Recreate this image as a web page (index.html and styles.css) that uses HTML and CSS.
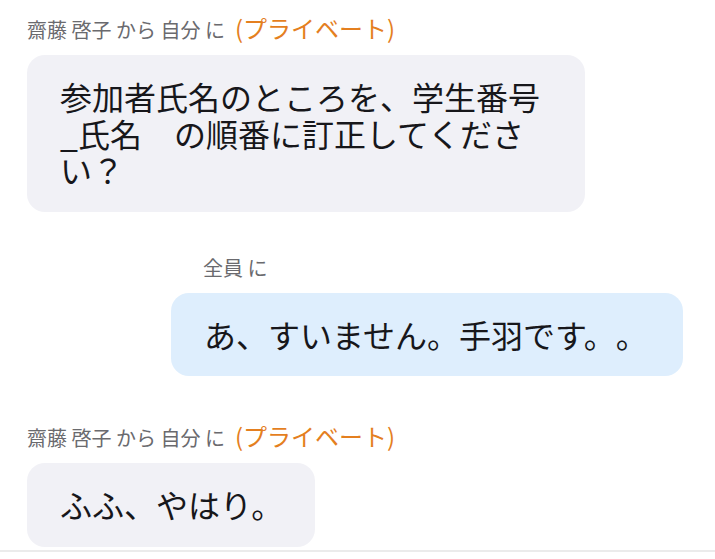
FILE: index.html
```html
<!DOCTYPE html>
<html lang="ja">
<head>
<meta charset="utf-8">
<title>Chat</title>
<link rel="stylesheet" href="styles.css">
</head>
<body>
<div class="chat">
  <div class="msg msg-in first">
    <div class="meta"><span class="who">齋藤 啓子 から 自分 に</span><span class="private">(プライベート)</span></div>
    <div class="bubble bubble-in wide">参加者氏名のところを、学生番号_氏名　の順番に訂正してください？</div>
  </div>
  <div class="msg msg-out">
    <div class="meta meta-out"><span class="who">全員 に</span></div>
    <div class="bubble bubble-out">あ、すいません。手羽です。。</div>
  </div>
  <div class="msg msg-in third">
    <div class="meta"><span class="who">齋藤 啓子 から 自分 に</span><span class="private">(プライベート)</span></div>
    <div class="bubble bubble-in">ふふ、やはり。</div>
  </div>
</div>
<div class="footer-line"></div>
</body>
</html>
```

FILE: styles.css
```css
html, body {
  margin: 0;
  padding: 0;
  background: #ffffff;
}
body {
  font-family: "Noto Sans CJK JP", "Noto Sans", sans-serif;
  color: #17171b;
  width: 715px;
  height: 559px;
  overflow: hidden;
  text-spacing-trim: space-all;
  font-feature-settings: "palt" 0, "halt" 0;
}
.chat {
  display: flex;
  flex-direction: column;
  height: 550px;
}
.msg {
  display: flex;
  flex-direction: column;
}
.msg-in {
  align-items: flex-start;
  padding-left: 27px;
}
.msg-out {
  align-items: flex-end;
  padding-right: 32px;
  margin-top: 41px;
}
.first {
  margin-top: 13px;
}
.third {
  margin-top: 45px;
}
.meta {
  height: 30px;
  line-height: 30px;
  margin-bottom: 12px;
  white-space: nowrap;
}
.meta-out {
  align-self: flex-start;
  margin-left: 203px;
  margin-bottom: 10px;
}
.who {
  font-size: 20px;
  color: #6a6a6e;
}
.private {
  font-size: 24px;
  margin-left: 10px;
  color: #e47f1f;
}
.bubble {
  box-sizing: border-box;
  font-size: 32px;
  line-height: 36.5px;
  padding: 23px 32px 24px 33px;
  border-radius: 18px;
}
.bubble-in {
  background: #f1f1f6;
}
.wide {
  max-width: 558px;
}
.bubble-out {
  background: #deeefd;
  width: 512px;
}
.footer-line {
  height: 2px;
  background: #ebebeb;
}
```
